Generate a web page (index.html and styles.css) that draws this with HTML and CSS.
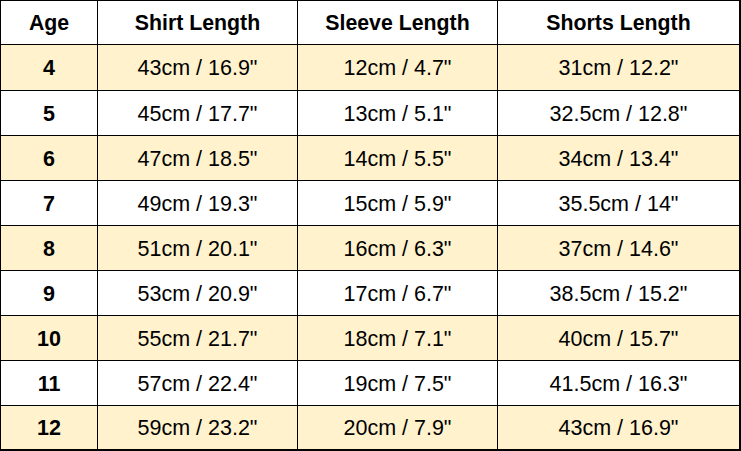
FILE: index.html
```html
<!DOCTYPE html>
<html>
<head>
<meta charset="utf-8">
<link rel="stylesheet" href="styles.css">
</head>
<body>
<div class="chart">
  <div class="cell head">Age</div><div class="cell head">Shirt Length</div><div class="cell head">Sleeve Length</div><div class="cell head">Shorts Length</div>
  <div class="cell age alt">4</div><div class="cell alt">43cm / 16.9"</div><div class="cell alt">12cm / 4.7"</div><div class="cell alt">31cm / 12.2"</div>
  <div class="cell age">5</div><div class="cell">45cm / 17.7"</div><div class="cell">13cm / 5.1"</div><div class="cell">32.5cm / 12.8"</div>
  <div class="cell age alt">6</div><div class="cell alt">47cm / 18.5"</div><div class="cell alt">14cm / 5.5"</div><div class="cell alt">34cm / 13.4"</div>
  <div class="cell age">7</div><div class="cell">49cm / 19.3"</div><div class="cell">15cm / 5.9"</div><div class="cell">35.5cm / 14"</div>
  <div class="cell age alt">8</div><div class="cell alt">51cm / 20.1"</div><div class="cell alt">16cm / 6.3"</div><div class="cell alt">37cm / 14.6"</div>
  <div class="cell age">9</div><div class="cell">53cm / 20.9"</div><div class="cell">17cm / 6.7"</div><div class="cell">38.5cm / 15.2"</div>
  <div class="cell age alt">10</div><div class="cell alt">55cm / 21.7"</div><div class="cell alt">18cm / 7.1"</div><div class="cell alt">40cm / 15.7"</div>
  <div class="cell age">11</div><div class="cell">57cm / 22.4"</div><div class="cell">19cm / 7.5"</div><div class="cell">41.5cm / 16.3"</div>
  <div class="cell age alt">12</div><div class="cell alt">59cm / 23.2"</div><div class="cell alt">20cm / 7.9"</div><div class="cell alt">43cm / 16.9"</div>
</div>
</body>
</html>
```
FILE: styles.css
```css
html, body {
  margin: 0;
  padding: 0;
  background: #fff;
}
.chart {
  box-sizing: border-box;
  width: 741px;
  height: 451px;
  display: grid;
  grid-template-columns: 96px 199px 199px 1fr;
  grid-template-rows: 43px 45px repeat(7, 44px) 43px;
  gap: 1px;
  padding: 1px 2px 2px 1px;
  background: #000;
  font-family: "Liberation Sans", Arial, sans-serif;
  color: #000;
}
.cell {
  box-sizing: border-box;
  background: #fff;
  display: flex;
  align-items: center;
  justify-content: center;
  padding-top: 2px;
  font-size: 21.5px;
}
.alt {
  background: #fff2cc;
}
.head {
  font-weight: bold;
  font-size: 21.3px;
}
.age {
  font-weight: bold;
}
```
